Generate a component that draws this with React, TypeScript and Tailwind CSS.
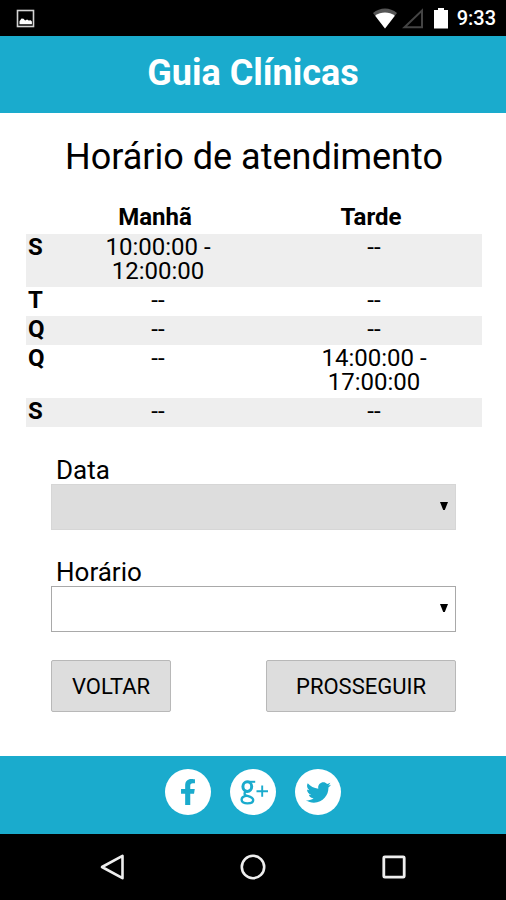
import React, { useState } from "react";
import { FaFacebookF, FaTwitter } from "react-icons/fa";

interface Schedule {
    day: string;
    morning: string;
    afternoon: string;
}

const schedules: Schedule[] = [
    { day: "S", morning: "10:00:00 - 12:00:00", afternoon: "--" },
    { day: "T", morning: "--", afternoon: "--" },
    { day: "Q", morning: "--", afternoon: "--" },
    { day: "Q", morning: "--", afternoon: "14:00:00 - 17:00:00" },
    { day: "S", morning: "--", afternoon: "--" },
];

function StatusBar() {
    return (
        <div className="flex h-9 items-center bg-black pl-4 pr-[10px] text-white">
            <svg className="h-[19px] w-[19px]" viewBox="0 0 19 19" fill="none">
                <rect x="1.5" y="1.5" width="16" height="16" stroke="#d4d4d4" strokeWidth="1.6" />
                <path d="M3.5 15.2v-3l2-2.8 2 .3 1.6 1.9 2-1 1.6 1 2-.4 1.2 1.4v2.6z" fill="#fff" />
            </svg>
            <div className="ml-auto flex items-center">
                <svg className="h-[22px] w-6" viewBox="0 0 24 22">
                    <path d="M0 6C7 0 17 0 24 6L12 21.5z" fill="#555" />
                    <path d="M2.2 8.8c5.6-4.4 14-4.4 19.6 0L12 21.5z" fill="#fff" />
                </svg>
                <svg className="ml-[5px] h-[22px] w-[22px]" viewBox="0 0 22 22" fill="none">
                    <path d="M2.5 20.2H20V3.5z" stroke="#444" strokeWidth="2" />
                </svg>
                <svg className="ml-[9px] h-[22px] w-4" viewBox="0 0 16 22">
                    <path d="M5 1h6v2h4v18.5H1V3h4z" fill="#fff" />
                </svg>
                <span className="ml-2 text-xl leading-6 font-medium">9:33</span>
            </div>
        </div>
    );
}

function GooglePlusIcon() {
    return (
        <svg className="h-[46px] w-[46px]" viewBox="0 0 46 46" fill="none" stroke="currentColor">
            <ellipse cx="17.3" cy="17.6" rx="4.4" ry="4.8" strokeWidth="3" />
            <path d="M18 12.8h7.2" strokeWidth="2" />
            <path d="M16.2 22.6c-2.8 1.8-2 3.2.8 4.2 3.2 1 6.2 1.8 6.2 4.2 0 2.2-2.6 3.4-5.8 3.4s-5.8-1.2-5.8-3.6c0-2.2 2-3.6 5-4" strokeWidth="2.4" />
            <path d="M26.5 22.2h11.5M32.2 16.6v11.2" strokeWidth="1.9" />
        </svg>
    );
}

interface SelectFieldProps {
    id: string;
    label: string;
    disabled?: boolean;
}

function SelectField({ id, label, disabled }: SelectFieldProps) {
    const [value, setValue] = useState("");

    return (
        <div className="flex flex-col">
            <label htmlFor={id} className="pl-[5px] text-[26px] leading-7">
                {label}
            </label>
            <div className="relative">
                <select
                    id={id}
                    className="block h-[46px] w-full appearance-none border border-[#a9a9a9] bg-white px-2 text-xl disabled:border-[#d6d6d6] disabled:bg-[#dddddd]"
                    value={value}
                    onChange={(e) => setValue(e.target.value)}
                    disabled={disabled}
                >
                    <option value=""></option>
                </select>
                {/* Seta do select */}
                <svg
                    className="pointer-events-none absolute top-[18px] right-2 h-2 w-2"
                    viewBox="0 0 8 8"
                >
                    <path d="M0 0h8L4.8 8H3.2z" fill="#000" />
                </svg>
            </div>
        </div>
    );
}

export default function App() {
    return (
        <div className="flex min-h-screen flex-col bg-white font-['Roboto',sans-serif] text-black">
            <StatusBar />

            <header className="flex h-[77px] items-center justify-center bg-[#1aabcd] pb-1">
                <h1 className="text-4xl font-bold text-white">Guia Clínicas</h1>
            </header>

            <main className="flex-1 pt-6 pr-6 pl-[26px]">
                <h2 className="text-center text-4xl">Horário de atendimento</h2>

                {/* Horários por dia da semana */}
                <table className="mt-7 w-full table-fixed text-2xl leading-6">
                    <thead>
                        <tr>
                            <th className="w-6"></th>
                            <th className="pr-[6px] pb-[5px] font-bold">Manhã</th>
                            <th className="pr-[6px] pb-[5px] font-bold">Tarde</th>
                        </tr>
                    </thead>
                    <tbody>
                        {schedules.map((item, index) => (
                            <tr key={index} className="align-top odd:bg-[#eeeeee]">
                                <th className="pt-[1px] pb-1 pl-[2px] text-left font-bold">{item.day}</th>
                                <td className="px-10 pt-[1px] pb-1 text-center">{item.morning}</td>
                                <td className="px-10 pt-[1px] pb-1 text-center">{item.afternoon}</td>
                            </tr>
                        ))}
                    </tbody>
                </table>

                <form className="pt-[29px] pr-[26px] pb-11 pl-[25px]" onSubmit={(e) => e.preventDefault()}>
                    <div className="flex flex-col gap-7">
                        <SelectField id="data" label="Data" disabled />
                        <SelectField id="horario" label="Horário" />
                        <div className="flex justify-between">
                            <button
                                type="button"
                                className="h-[52px] rounded-xs border border-[#b8b8b8] bg-[#dddddd] px-5 text-[22px]"
                            >
                                VOLTAR
                            </button>
                            <button
                                type="submit"
                                className="h-[52px] rounded-xs border border-[#b8b8b8] bg-[#dddddd] px-[29px] text-[22px]"
                            >
                                PROSSEGUIR
                            </button>
                        </div>
                    </div>
                </form>
            </main>

            <footer className="flex h-[78px] items-center justify-center gap-[19px] bg-[#1aabcd] pb-[6px] text-[#1aabcd]">
                <a href="#facebook" aria-label="Facebook" className="flex h-[46px] w-[46px] items-center justify-center rounded-full bg-white">
                    <FaFacebookF size={26} />
                </a>
                <a href="#google" aria-label="Google Plus" className="flex h-[46px] w-[46px] items-center justify-center rounded-full bg-white">
                    <GooglePlusIcon />
                </a>
                <a href="#twitter" aria-label="Twitter" className="flex h-[46px] w-[46px] items-center justify-center rounded-full bg-white">
                    <FaTwitter size={25} />
                </a>
            </footer>

            {/* Barra de navegação do Android */}
            <nav className="grid h-[66px] grid-cols-3 items-center bg-black px-[42px] text-[#eeeeee]">
                <button type="button" aria-label="Voltar à tela anterior" className="justify-self-center">
                    <svg className="h-7 w-7" viewBox="0 0 28 28" fill="none" stroke="currentColor" strokeWidth="2.6">
                        <path d="M24.5 2.8v22.4L4 14z" strokeLinejoin="round" />
                    </svg>
                </button>
                <button type="button" aria-label="Início" className="justify-self-center">
                    <svg className="h-7 w-7" viewBox="0 0 28 28" fill="none" stroke="currentColor" strokeWidth="2.6">
                        <circle cx="14" cy="14" r="11.2" />
                    </svg>
                </button>
                <button type="button" aria-label="Aplicativos recentes" className="justify-self-center">
                    <svg className="h-7 w-7" viewBox="0 0 28 28" fill="none" stroke="currentColor" strokeWidth="2.8">
                        <rect x="3.8" y="3.8" width="20.4" height="20.4" rx="1" />
                    </svg>
                </button>
            </nav>
        </div>
    );
}
